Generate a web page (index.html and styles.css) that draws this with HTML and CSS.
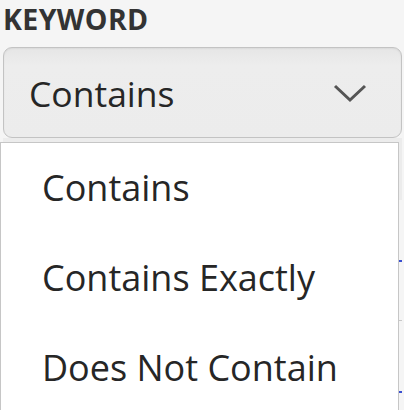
FILE: index.html
```html
<!DOCTYPE html>
<html>
<head>
<meta charset="utf-8">
<link rel="stylesheet" href="styles.css">
</head>
<body>
<div class="page">
  <div class="label">KEYWORD</div>
  <div class="field">
    <div class="select">
      <span class="value">Contains</span>
      <svg class="chev" width="34" height="20" viewBox="0 0 34 20"><path d="M2 3 L17 17 L32 3" fill="none" stroke="#555" stroke-width="3"/></svg>
    </div>
    <div class="under">
      <div class="row row-a"></div>
      <div class="row row-b"><span class="mark m1"></span></div>
      <div class="row row-c"><span class="mark m2"></span></div>
    </div>
    <ul class="menu">
      <li>Contains</li>
      <li>Contains Exactly</li>
      <li>Does Not Contain</li>
    </ul>
  </div>
</div>
</body>
</html>
```
FILE: styles.css
```css
html, body {
  margin: 0;
  padding: 0;
  background: #f5f5f5;
  font-family: "Open Sans", "Noto Sans", sans-serif;
  color: #262626;
  overflow: hidden;
  height: 410px;
}
.page {
  padding: 0 2px 0 3px;
}
.label {
  font-size: 28.5px;
  font-weight: 700;
  line-height: 38px;
  color: #333;
  letter-spacing: 0.4px;
  margin-bottom: 9px;
}
.field {
  position: relative;
}
.select {
  box-sizing: border-box;
  height: 91px;
  border: 1.5px solid #c3c3c3;
  border-radius: 9px;
  background: linear-gradient(#e6e6e6, #ededed 20%, #ececec);
  display: flex;
  align-items: center;
  justify-content: space-between;
  padding: 0 34px 0 25px;
  box-shadow: inset 0 1px 2px rgba(0,0,0,0.06);
}
.value {
  font-size: 35.5px;
  line-height: 40px;
  color: #262626;
}
.chev {
  display: block;
}
.under {
  height: 272px;
  overflow: hidden;
}
.row {
  border-bottom: 1px solid #c8c8c8;
  position: relative;
}
.row-a { height: 62px; background: #ececec; border-bottom: none; }
.row-b { height: 120px; }
.row-c { height: 80px; border-bottom: none; }
.menu {
  position: absolute;
  left: -3px;
  top: 95px;
  width: 399px;
  box-sizing: border-box;
  margin: 0;
  padding: 0;
  list-style: none;
  background: #fff;
  border: 1.5px solid #c6c6c6;
  border-bottom: none;
  height: 272px;
  overflow: hidden;
}
.menu li {
  height: 90px;
  padding-left: 41px;
  font-size: 36px;
  line-height: 90px;
  color: #262626;
}
.mark {
  position: absolute;
  background: #3a4fd0;
  height: 2px;
  width: 6px;
  right: 0;
}
.m1 { top: 60px; }
.m2 { top: 70px; }
```
